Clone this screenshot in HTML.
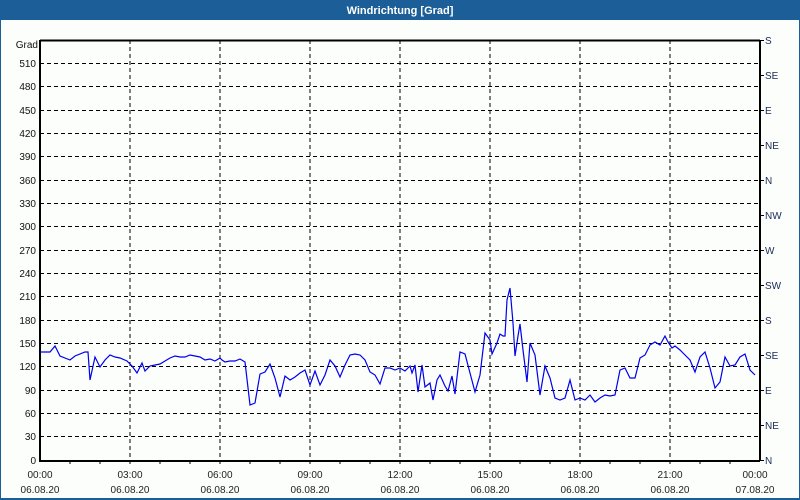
<!DOCTYPE html>
<html><head><meta charset="utf-8"><style>
html,body{margin:0;padding:0;width:800px;height:500px;overflow:hidden;background:#fff}
svg{display:block}
</style></head><body>
<svg width="800" height="500" xmlns="http://www.w3.org/2000/svg" font-family="Liberation Sans, sans-serif" font-size="10">
<rect x="0" y="0" width="800" height="500" fill="#fcfefc"/>
<rect x="0" y="0" width="800" height="20" fill="#1c5e97"/>
<rect x="0" y="0" width="1" height="500" fill="#1c5e97"/>
<rect x="799" y="0" width="1" height="500" fill="#1c5e97"/>
<rect x="0" y="498" width="800" height="2" fill="#1c5e97"/>
<text x="400" y="14" fill="#fff" font-weight="bold" font-size="11" text-anchor="middle">Windrichtung [Grad]</text>
<g stroke="#000" stroke-width="1" stroke-dasharray="4,3" fill="none">
<path d="M130 40V460M220 40V460M310 40V460M400 40V460M490 40V460M580 40V460M670 40V460"/>
<path d="M40 63.5H760M40 86.5H760M40 110.5H760M40 133.5H760M40 156.5H760M40 180.5H760M40 203.5H760M40 226.5H760M40 250.5H760M40 273.5H760M40 296.5H760M40 320.5H760M40 343.5H760M40 366.5H760M40 390.5H760M40 413.5H760M40 436.5H760"/>
</g>
<g stroke="#000" stroke-width="2" fill="none">
<path d="M40 40V461H760M40 40.5H760M760 40V461"/>
</g>
<g stroke="#000" stroke-width="1">
<path d="M70 460V464M100 460V464M130 460V464M160 460V464M190 460V464M220 460V464M250 460V464M280 460V464M310 460V464M340 460V464M370 460V464M400 460V464M430 460V464M460 460V464M490 460V464M520 460V464M550 460V464M580 460V464M610 460V464M640 460V464M670 460V464M700 460V464M730 460V464"/>
<path d="M760 40.5H764M760 75.5H764M760 110.5H764M760 145.5H764M760 180.5H764M760 215.5H764M760 250.5H764M760 285.5H764M760 320.5H764M760 355.5H764M760 390.5H764M760 425.5H764M760 460.5H764"/>
</g>
<polyline fill="none" stroke="#0000ee" stroke-width="1.2" points="40,352 50,352 55,346 60,356 70,360 75,356 85,352 88,352 90,380 95,357 100,367 105,360 110,355 115,357 120,358 127,361 132,366 137,373 142,363 145,371 150,366 155,365 160,364 165,361 170,358 175,356 180,357 185,357 190,355 195,356 200,357 205,360 210,359 215,361 220,358 222,360 225,362 230,361 235,361 240,359 245,362 250,405 255,403 260,374 265,372 270,364 275,378 280,397 285,376 290,380 295,377 300,373 305,370 310,385 315,371 320,385 325,375 330,360 335,366 340,377 345,365 350,355 355,354 360,355 365,360 370,372 375,375 380,384 385,368 390,368 395,370 400,368 405,371 410,366 412,373 415,365 418,392 422,365 425,387 430,383 433,400 437,380 440,375 445,386 448,391 452,376 455,394 460,352 465,354 470,373 475,392 480,375 485,333 490,340 492,354 497,343 500,334 503,336 505,336 507,300 510,288 513,323 515,356 518,336 520,324 523,350 527,382 530,343 535,355 540,395 545,366 550,378 555,398 560,400 565,398 570,380 575,400 580,398 585,400 590,395 595,402 600,398 605,395 610,396 615,395 620,370 625,368 630,378 635,378 640,358 645,355 650,345 655,342 660,345 665,336 668,342 672,348 675,346 680,350 685,355 690,360 695,372 700,357 705,352 710,368 715,388 720,382 725,357 730,366 735,365 740,357 745,354 750,370 755,375"/>
<g fill="#111" text-anchor="end">
<text x="38" y="48">Grad</text>
<text x="36" y="67">510</text><text x="36" y="90">480</text><text x="36" y="114">450</text><text x="36" y="137">420</text><text x="36" y="160">390</text><text x="36" y="184">360</text><text x="36" y="207">330</text><text x="36" y="230">300</text><text x="36" y="254">270</text><text x="36" y="277">240</text><text x="36" y="300">210</text><text x="36" y="324">180</text><text x="36" y="347">150</text><text x="36" y="370">120</text><text x="36" y="394">90</text><text x="36" y="417">60</text><text x="36" y="440">30</text><text x="36" y="464">0</text>
</g>
<g fill="#1a2a55">
<text x="765" y="44">S</text><text x="765" y="79">SE</text><text x="765" y="114">E</text><text x="765" y="149">NE</text><text x="765" y="184">N</text><text x="765" y="219">NW</text><text x="765" y="254">W</text><text x="765" y="289">SW</text><text x="765" y="324">S</text><text x="765" y="359">SE</text><text x="765" y="394">E</text><text x="765" y="429">NE</text><text x="765" y="464">N</text>
</g>
<g fill="#222" text-anchor="middle">
<text x="40" y="478">00:00</text><text x="40" y="493">06.08.20</text>
<text x="130" y="478">03:00</text><text x="130" y="493">06.08.20</text>
<text x="220" y="478">06:00</text><text x="220" y="493">06.08.20</text>
<text x="310" y="478">09:00</text><text x="310" y="493">06.08.20</text>
<text x="400" y="478">12:00</text><text x="400" y="493">06.08.20</text>
<text x="490" y="478">15:00</text><text x="490" y="493">06.08.20</text>
<text x="580" y="478">18:00</text><text x="580" y="493">06.08.20</text>
<text x="670" y="478">21:00</text><text x="670" y="493">06.08.20</text>
<text x="755" y="478">00:00</text><text x="755" y="493">07.08.20</text>
</g>
</svg>
</body></html>
